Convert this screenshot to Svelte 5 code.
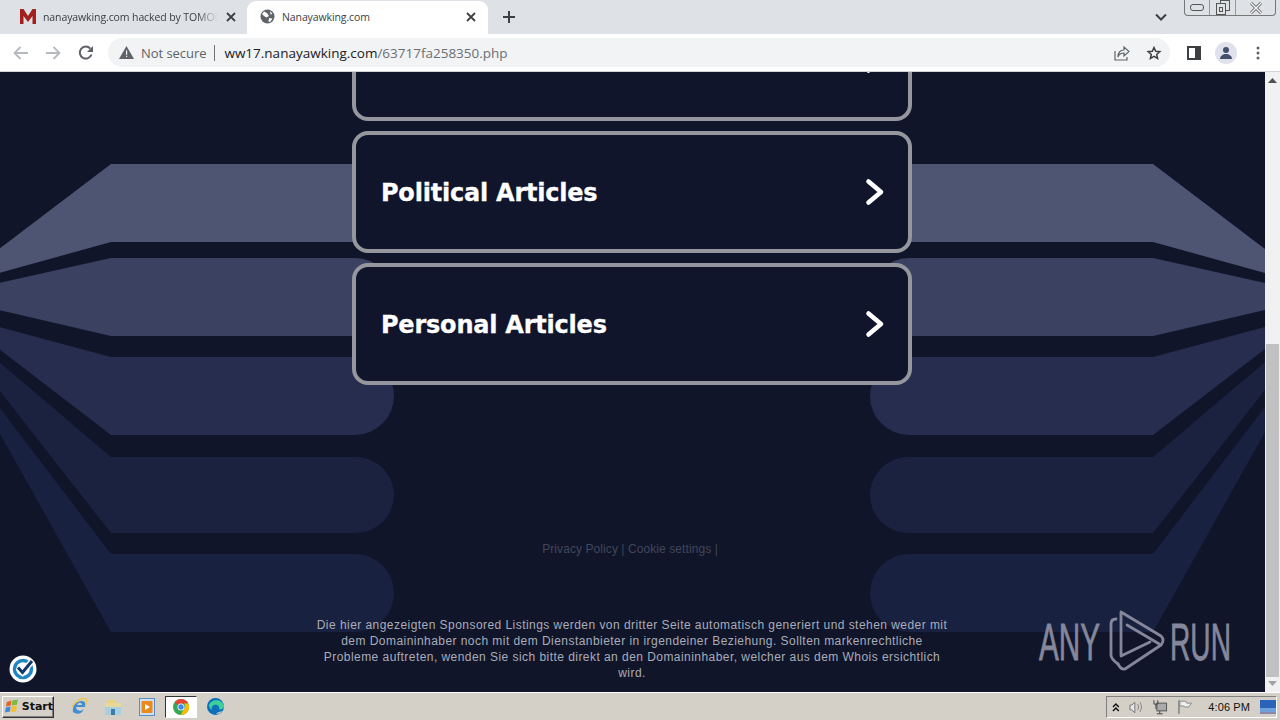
<script>
  const tabs = [{ title: 'nanayawking.com hacked by TOMODACHI', active: false }, { title: 'Nanayawking.com', active: true }];
  const cards = ['Social Articles', 'Political Articles', 'Personal Articles'];
  const bands = [
    { d: 'M-1 249L111 164H355A39 39 0 0 1 355 242H111L-1 273Z', c: '#4d5572' },
    { d: 'M-1 283L111 258H355A39 39 0 0 1 355 336H111L-1 310Z', c: '#3b4161' },
    { d: 'M-1 327L111 357H355A39 39 0 0 1 355 435H111L-1 349Z', c: '#272d4e' },
    { d: 'M-1 362L111 457H356A38 38 0 0 1 356 533H111L-1 390Z', c: '#1a2240' },
    { d: 'M-1 407L111 554H355A39 39 0 0 1 355 632H111L-1 432Z', c: '#192140' }
  ];
</script>

<div class="screen">
  <header class="tabstrip">
    <div class="tab">
      <svg class="fav" width="16" height="15" viewBox="0 0 16 15"><path d="M0 15V0h3.500L8 7l4.500-7H16v15h-3.500V7L8 13 3.500 7v8Z" fill="#a3201d"/></svg>
      <span class="tab-title fade">{tabs[0].title}</span>
      <svg class="x" width="10" height="10" viewBox="0 0 10 10"><path d="M1 1l8 8M9 1l-8 8" stroke="#3c4043" stroke-width="1.800"/></svg>
    </div>
    <div class="tab active">
      <svg class="fav" width="15" height="15" viewBox="0 0 15 15"><circle cx="7.500" cy="7.500" r="7" fill="#5f6368"/><path d="M4 2.500l3 1.500 2 3-2.500 1.500L4 7 2 5ZM9 9l3.500.5-2 3L8.500 13Z M10 2l2.500 3-2 .5Z" fill="#fff"/></svg>
      <span class="tab-title">{tabs[1].title}</span>
      <svg class="x" width="10" height="10" viewBox="0 0 10 10"><path d="M1 1l8 8M9 1l-8 8" stroke="#3c4043" stroke-width="1.800"/></svg>
    </div>
    <svg class="plus" width="12" height="12" viewBox="0 0 12 12"><path d="M6 0v12M0 6h12" stroke="#3c4043" stroke-width="2"/></svg>
    <svg class="tablist" width="12" height="8" viewBox="0 0 12 8"><path d="M1 1.500l5 5 5-5" fill="none" stroke="#3c4043" stroke-width="2"/></svg>
    <div class="winctl">
      <span class="wc"><svg width="14" height="7" viewBox="0 0 14 7"><rect x=".5" y=".5" width="13" height="6" rx="2.500" fill="none" stroke="#555"/></svg></span>
      <span class="wc"><svg width="14" height="15" viewBox="0 0 14 15"><rect x="4.500" y=".5" width="9" height="10" fill="#dee1e6" stroke="#555"/><rect x=".5" y="3.500" width="9" height="11" fill="#dee1e6" stroke="#555"/><rect x="3.500" y="7.500" width="3" height="4" fill="none" stroke="#555"/></svg></span>
      <span class="wc"><svg width="12" height="12" viewBox="0 0 12 12"><path d="M1 1l10 10M11 1L1 11" stroke="#555" stroke-width="3"/><path d="M1 1l10 10M11 1L1 11" stroke="#fff" stroke-width="1.400"/></svg></span>
    </div>
  </header>

  <nav class="toolbar">
    <span class="navbtn"><svg width="16" height="14" viewBox="0 0 16 14"><path d="M15 7H2M7.500 1L1.500 7l6 6" fill="none" stroke="#b6b9be" stroke-width="1.800"/></svg></span>
    <span class="navbtn"><svg width="16" height="14" viewBox="0 0 16 14"><path d="M1 7h13M8.500 1l6 6-6 6" fill="none" stroke="#b6b9be" stroke-width="1.800"/></svg></span>
    <span class="navbtn reload"><svg width="16" height="16" viewBox="0 0 16 16"><path d="M13.500 9.500A6 6 0 1 1 12.300 3.600" fill="none" stroke="#5f6368" stroke-width="2"/><path d="M15 1v6H9Z" fill="#5f6368"/></svg></span>
    <div class="omnibox">
      <svg class="warn" width="15" height="13" viewBox="0 0 15 13"><path d="M7.500 0L15 13H0Z" fill="#5f6368"/><path d="M7 4.500h1.200v4.200H7ZM7 9.800h1.200V11H7Z" fill="#f1f3f4"/></svg>
      <span class="notsecure">Not secure</span>
      <span class="sep"></span>
      <span class="url">ww17.nanayawking.com<span class="path">/63717fa258350.php</span></span>
      <span class="omni-icons">
        <svg width="16" height="16" viewBox="0 0 16 16"><path d="M1 6v9h12v-3" fill="none" stroke="#5f6368" stroke-width="1.200"/><path d="M4 12c0-5 3-7 6-7V2l5 4.500L10 11V8c-3 0-5 1-6 4Z" fill="none" stroke="#5f6368" stroke-width="1.200"/></svg>
        <svg width="16" height="16" viewBox="0 0 16 16"><path d="M8 2.500l1.700 3.800 4.100.4-3.100 2.700.9 4.100L8 11.400l-3.600 2.100.9-4.100-3.100-2.700 4.100-.4Z" fill="none" stroke="#3c4043" stroke-width="1.500"/></svg>
      </span>
    </div>
    <span class="navbtn side"><svg width="14" height="14" viewBox="0 0 14 14"><rect x="1" y="1" width="12" height="12" fill="none" stroke="#3c4043" stroke-width="2"/><rect x="8" y="1" width="5" height="12" fill="#3c4043"/></svg></span>
    <span class="navbtn"><span class="avatar"><svg width="14" height="14" viewBox="0 0 14 14"><circle cx="7" cy="4" r="3" fill="#44506e"/><path d="M1 13c0-3 3-5 6-5s6 2 6 5Z" fill="#44506e"/></svg></span></span>
    <span class="navbtn"><svg width="4" height="14" viewBox="0 0 4 14"><circle cx="2" cy="2" r="1.500" fill="#5f6368"/><circle cx="2" cy="7" r="1.500" fill="#5f6368"/><circle cx="2" cy="12" r="1.500" fill="#5f6368"/></svg></span>
  </nav>

  <div class="viewport">
    <main class="page">
      <svg class="bands" width="1265" height="620" viewBox="0 72 1265 620" aria-hidden="true">
        {#each bands as b}<path d={b.d} fill={b.c}/><path d={b.d} fill={b.c} transform="matrix(-1 0 0 1 1264 0)"/>{/each}
      </svg>
      <div class="content">
        <div class="cards">
          {#each cards as c}
            <div class="card">
              <span>{c}</span>
              <svg width="20" height="28" viewBox="0 0 20 28"><path d="M3.500 3.500L16 14 3.500 24.500" fill="none" stroke="#fff" stroke-width="4.600" stroke-linecap="round" stroke-linejoin="round"/></svg>
            </div>
          {/each}
        </div>
        <p class="links">Privacy Policy | Cookie settings |</p>
        <p class="disclaimer">Die hier angezeigten Sponsored Listings werden von dritter Seite automatisch generiert und stehen weder mit dem Domaininhaber noch mit dem Dienstanbieter in irgendeiner Beziehung. Sollten markenrechtliche Probleme auftreten, wenden Sie sich bitte direkt an den Domaininhaber, welcher aus dem Whois ersichtlich wird.</p>
      </div>
      <svg class="badge" width="28" height="28" viewBox="0 0 28 28">
        <circle cx="14" cy="14" r="13.500" fill="#fff"/>
        <circle cx="14" cy="14" r="8.500" fill="none" stroke="#1f86c4" stroke-width="3.500"/>
        <path d="M9 12.500l4.500 5L23 6" fill="none" stroke="#fff" stroke-width="6"/>
        <path d="M9 12.500l4.500 5L23 6" fill="none" stroke="#12386b" stroke-width="3"/>
      </svg>
      <svg class="watermark" width="200" height="66" viewBox="1035 608 200 66" aria-label="ANY RUN">
        <g fill="#85879a" stroke="#85879a" stroke-width=".8" font-family="Liberation Sans, sans-serif" font-size="52">
          <text x="1039" y="660" textLength="61" lengthAdjust="spacingAndGlyphs">ANY</text>
          <text x="1170" y="660" textLength="61" lengthAdjust="spacingAndGlyphs">RUN</text>
        </g>
        <g fill="none" stroke="#85879a" stroke-width="2.800" stroke-linejoin="round" stroke-linecap="round">
          <path d="M1116 619Q1111 619 1111 624V655Q1111 659 1118 664"/>
          <path d="M1150 642L1121 656V612L1161 636Q1165 640 1161 645L1125 669Q1121 670 1118 664"/>
          <path d="M1127 625L1161 645"/>
        </g>
      </svg>
    </main>
    <aside class="scrollbar">
      <svg width="9" height="5" viewBox="0 0 9 5"><path d="M4.500 0L9 5H0Z" fill="#505050"/></svg>
      <div class="thumb"></div>
      <svg width="9" height="5" viewBox="0 0 9 5"><path d="M0 0H9L4.500 5Z" fill="#a3a3a3"/></svg>
    </aside>
  </div>

  <footer class="taskbar">
    <div class="start">
      <svg width="16" height="15" viewBox="0 0 16 15"><path d="M2 2.500L7 1l-.8 5.500L1 7.500Z" fill="#e8622c"/><path d="M8 1l6-1-1 5.500-5.800.8Z" fill="#7dbb3f"/><path d="M1 8.500l5-1-.7 5.500L0 14Z" fill="#3f87d8"/><path d="M7 7.500l5.800-.8L12 13l-6 .5Z" fill="#f4c02f"/></svg>
      <span>Start</span>
    </div>
    <div class="launch">
      <svg width="18" height="18" viewBox="0 0 18 18"><path d="M3 14c-1-6 3-11 9-11 3 0 4 3 3 6H6c0 4 5 5 8 2-2 5-7 6-11 3Z" fill="#3f8ed6"/><path d="M7 7h5c0-3-4-3-5 0Z" fill="#d4d0c8"/><path d="M2 9C5 3 13-1 16 1c2 2 0 5-1 7" fill="none" stroke="#e9c640" stroke-width="1.200"/></svg>
    </div>
    <div class="launch">
      <svg width="18" height="18" viewBox="0 0 18 18"><path d="M3 2h8l1 3H3Z" fill="#e9d27a"/><rect x="1" y="5" width="16" height="12" fill="#a8cfe0"/><rect x="1" y="5" width="16" height="4" fill="#e8d89a"/><rect x="7" y="11" width="4" height="6" fill="#3f7da8"/></svg>
    </div>
    <div class="launch">
      <svg width="16" height="18" viewBox="0 0 16 18"><rect x=".5" y=".5" width="15" height="17" fill="#cfe0f2" stroke="#5a8ec4"/><rect x="2.500" y="3" width="11" height="12" rx="1" fill="#ea8a1e"/><path d="M6 6l5 3-5 3Z" fill="#fff"/></svg>
    </div>
    <div class="launch current">
      <svg width="16" height="16" viewBox="0 0 16 16"><circle cx="8" cy="8" r="8" fill="#34a853"/><path d="M8 0a8 8 0 0 1 7.200 4.500H8A3.500 3.500 0 0 0 4.800 6.500L2 2.800A8 8 0 0 1 8 0Z" fill="#ea4335"/><path d="M15.200 4.500A8 8 0 0 1 7.500 16l3.500-6a3.500 3.500 0 0 0 0-5.500Z" fill="#fbbc05"/><circle cx="8" cy="8" r="3.500" fill="#fff"/><circle cx="8" cy="8" r="2.700" fill="#4285f4"/></svg>
    </div>
    <div class="launch">
      <svg width="17" height="17" viewBox="0 0 17 17"><circle cx="8.500" cy="8.500" r="8.500" fill="#0d6fb8"/><path d="M2 7c2-6 13-7 15 1 0 3-3 4-5 3 1-3-2-5-5-4-2 .5-3 3-2 5-2-1-3-3-3-5Z" fill="#3fcf9b"/><path d="M9 16c3 0 5-1 6.500-3-2 .5-5 1-6.500 3Z" fill="#d4d0c8"/></svg>
    </div>
    <div class="tray">
      <svg width="8" height="9" viewBox="0 0 8 9"><path d="M1 4l3-3 3 3M1 8l3-3 3 3" fill="none" stroke="#111" stroke-width="1.500"/></svg>
      <svg class="t1" width="16" height="16" viewBox="0 0 16 16"><path d="M1 6h2l3-3v11l-3-3H1Z" fill="#e8e8e8" stroke="#777"/><path d="M9 5q2 3 0 6M11.500 3q3 5 0 10" fill="none" stroke="#888"/></svg>
      <svg class="t2" width="16" height="16" viewBox="0 0 16 16"><rect x="5" y="4" width="10" height="8" fill="#aaa" stroke="#555"/><path d="M2 1v4h4V1M4 5v5M8 12v3M5 15h6" fill="none" stroke="#444"/></svg>
      <svg class="t3" width="16" height="16" viewBox="0 0 16 16"><path d="M2 1v14" stroke="#777" stroke-width="1.400"/><path d="M3 2h6l1 2h5l-3 4H8L7 7H3Z" fill="#eee" stroke="#888"/></svg>
      <span class="clock">4:06 PM</span>
      <svg class="show" width="16" height="14" viewBox="0 0 16 14"><rect width="16" height="12" fill="#2a63b8"/><rect y="8" width="16" height="4" fill="#6fa0dc"/><rect y="12" width="16" height="2" fill="#88a"/></svg>
    </div>
  </footer>
</div>

<style>
  :global(body) { margin: 0; background: #10152a; }
  .screen { width: 1280px; height: 720px; display: flex; flex-direction: column; overflow: hidden; font-family: "Open Sans", sans-serif; }

  .tabstrip { height: 34px; flex: none; background: #dee1e6; display: flex; align-items: flex-start; box-sizing: border-box; padding-left: 8px; position: relative; }
  .tab { width: 239px; height: 33px; margin-top: 1px; display: flex; align-items: center; box-sizing: border-box; padding: 0 11px 2px 12px; }
  .tab.active { background: #fff; border-radius: 9px 9px 0 0; width: 241px; padding: 0 12px 2px 13px; }
  .fav { flex: none; margin-right: 7px; }
  .tab-title { flex: 1; font-size: 10.500px; color: #3c4043; white-space: nowrap; overflow: hidden; letter-spacing: -.1px; }
  .fade { mask-image: linear-gradient(to right, #000 88%, transparent 100%); }
  .x { flex: none; margin-left: 8px; }
  .plus { margin: 11px 0 0 15px; }
  .tablist { margin: 13px 0 0 640px; }
  .winctl { position: absolute; left: 1184px; top: 0; width: 92px; height: 16px; display: grid; grid-template-columns: 24px 26px 1fr; border: 1px solid #777; border-top: 0; border-radius: 0 0 4px 4px; box-sizing: border-box; }
  .wc { display: flex; align-items: center; justify-content: center; border-left: 1px solid #999; overflow: hidden; }
  .wc:first-child { border-left: 0; }

  .toolbar { height: 38px; flex: none; background: #fff; border-bottom: 1px solid #d0d3d8; box-sizing: border-box; display: flex; align-items: center; padding-left: 5px; }
  .navbtn { width: 32px; height: 32px; flex: none; display: flex; align-items: center; justify-content: center; }
  .navbtn.reload { padding-left: 1px; box-sizing: border-box; }
  .navbtn.side { margin-left: 8px; }
  .omnibox { width: 1062px; height: 29px; margin-left: 7px; background: #f1f3f4; border-radius: 15px; display: flex; align-items: center; box-sizing: border-box; padding-left: 11px; flex: none; }
  .warn { flex: none; }
  .notsecure { margin-left: 7px; font-size: 13px; color: #5f6368; letter-spacing: -.05px; }
  .sep { width: 1px; height: 16px; background: #70757a; margin: 0 9px 0 8px; }
  .url { font-size: 13.500px; color: #202124; letter-spacing: 0; }
  .path { color: #6b6f74; }
  .omni-icons { margin-left: auto; display: flex; gap: 16px; padding-right: 8px; }
  .avatar { width: 22px; height: 22px; border-radius: 50%; background: #dfe2ea; display: flex; align-items: center; justify-content: center; }

  .viewport { height: 620px; flex: none; display: flex; }
  .page { width: 1265px; position: relative; overflow: hidden; background: #10152a; }
  .bands { position: absolute; inset: 0; }
  .content { position: relative; display: flex; flex-direction: column; align-items: center; padding-right: 1px; }
  .cards { width: 560px; margin-top: -73px; display: flex; flex-direction: column; gap: 11px; }
  .card { height: 122px; margin-bottom: -1px; box-sizing: border-box; border: 4px solid #96979e; border-radius: 16px; background: #10152b; display: flex; align-items: center; justify-content: space-between; padding: 0 23px 0 25px; color: #fff; font: bold 24px "DejaVu Sans", Verdana, sans-serif; letter-spacing: -.22px; -webkit-text-stroke: .3px #fff; }
  .card span { margin-top: 1px; }
  .links { margin: 157px 4px 0 0; font: 12px/16px "Liberation Sans", Arial, sans-serif; letter-spacing: .08px; color: #41465b; }
  .disclaimer { width: 634px; margin: 60px 0 0; text-align: center; font: 12px/16px "Liberation Sans", Arial, sans-serif; letter-spacing: .45px; color: #a9acb9; }
  .badge { position: absolute; left: 9px; top: 583px; }
  .watermark { position: absolute; left: 1035px; top: 536px; overflow: visible; }

  .scrollbar { width: 15px; flex: none; background: #f1f1f1; display: flex; flex-direction: column; align-items: center; padding-top: 6px; box-sizing: border-box; }
  .thumb { width: 13px; height: 333px; background: #c1c1c1; margin-top: 261px; margin-bottom: 4px; }

  .taskbar { height: 28px; flex: none; background: #d4d0c8; border-top: 1px solid #fff; box-sizing: border-box; display: flex; align-items: center; padding-left: 2px; position: relative; }
  .start { width: 52px; height: 22px; box-sizing: border-box; border: 1px solid; border-color: #fff #333 #333 #fff; box-shadow: inset -1px -1px 0 #808080; display: flex; align-items: center; gap: 2px; padding-left: 2px; font: bold 11px "DejaVu Sans", Tahoma, sans-serif; color: #111; }
  .launch { width: 34px; height: 22px; display: flex; align-items: center; justify-content: center; flex: none; }
  .start + .launch { margin-left: 8px; }
  .launch.current { width: 32px; margin: 0 1px; box-sizing: border-box; background: #fff; border: 1px solid; border-color: #333 #fff #fff #333; }
  .tray { position: absolute; left: 1106px; top: 3px; width: 171px; height: 22px; box-sizing: border-box; border: 1px solid; border-color: #808080 #fff #fff #808080; display: flex; align-items: center; padding-left: 5px; color: #111; }
  .t1 { margin-left: 9px; }
  .t2 { margin-left: 8px; }
  .t3 { margin-left: 9px; }
  .clock { font: 11px "Liberation Sans", Tahoma, sans-serif; white-space: nowrap; flex: none; margin-left: 16px; letter-spacing: .1px; }
  .show { margin-left: 10px; flex: none; }
</style>
